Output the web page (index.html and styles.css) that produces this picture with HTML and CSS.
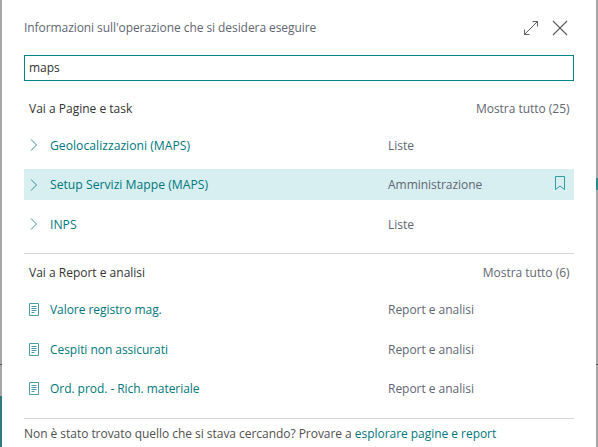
FILE: index.html
```html
<!DOCTYPE html>
<html lang="it">
<head>
<meta charset="utf-8">
<title>Ricerca</title>
<link rel="stylesheet" href="styles.css">
</head>
<body>
<div class="page">
<aside class="edge edge-left"></aside>
<main class="dialog">
  <header class="top">
    <span class="prompt">Informazioni sull'operazione che si desidera eseguire</span>
    <span class="actions">
      <svg class="ico-expand" width="16" height="16" viewBox="0 0 16 16"><path d="M1.500 14.500 14.500 1.500M9.500 1.500h5v5M1.500 9.500v5h5" fill="none" stroke="#605e5c" stroke-width="1"/></svg>
      <svg class="ico-close" width="16" height="16" viewBox="0 0 16 16"><path d="M1 1 15 15M15 1 1 15" fill="none" stroke="#605e5c" stroke-width="1.200"/></svg>
    </span>
  </header>
  <div class="search">maps</div>
  <section class="group">
    <div class="group-head"><strong>Vai a Pagine e task</strong><span class="show-all">Mostra tutto (25)</span></div>
    <div class="row"><svg class="chev" width="8" height="12" viewBox="0 0 8 12"><path d="M1 .5 6.500 6 1 11.500" fill="none" stroke="#2f8f94" stroke-width="1"/></svg><span class="name">Geolocalizzazioni (MAPS)</span><span class="cat">Liste</span></div>
    <div class="row active"><svg class="chev" width="8" height="12" viewBox="0 0 8 12"><path d="M1 .5 6.500 6 1 11.500" fill="none" stroke="#2f8f94" stroke-width="1"/></svg><span class="name">Setup Servizi Mappe (MAPS)</span><span class="cat">Amministrazione</span><svg class="mark" width="10" height="14" viewBox="0 0 10 14"><path d="M.5.500h9v13L5 10 .5 13.500Z" fill="none" stroke="#2e9ca3" stroke-width="1"/></svg></div>
    <div class="row"><svg class="chev" width="8" height="12" viewBox="0 0 8 12"><path d="M1 .5 6.500 6 1 11.500" fill="none" stroke="#2f8f94" stroke-width="1"/></svg><span class="name">INPS</span><span class="cat">Liste</span></div>
  </section>
  <section class="group second">
    <div class="group-head"><strong>Vai a Report e analisi</strong><span class="show-all">Mostra tutto (6)</span></div>
    <div class="row"><svg class="doc" width="10" height="13" viewBox="0 0 10 13"><path d="M.5.500h9v12h-9ZM2.500 3.500h5M2.500 5.500h5M2.500 7.500h5M2.500 9.500h3" fill="none" stroke="#4b9fa3" stroke-width="1"/></svg><span class="name">Valore registro mag.</span><span class="cat">Report e analisi</span></div>
    <div class="row"><svg class="doc" width="10" height="13" viewBox="0 0 10 13"><path d="M.5.500h9v12h-9ZM2.500 3.500h5M2.500 5.500h5M2.500 7.500h5M2.500 9.500h3" fill="none" stroke="#4b9fa3" stroke-width="1"/></svg><span class="name">Cespiti non assicurati</span><span class="cat">Report e analisi</span></div>
    <div class="row"><svg class="doc" width="10" height="13" viewBox="0 0 10 13"><path d="M.5.500h9v12h-9ZM2.500 3.500h5M2.500 5.500h5M2.500 7.500h5M2.500 9.500h3" fill="none" stroke="#4b9fa3" stroke-width="1"/></svg><span class="name">Ord. prod. - Rich. materiale</span><span class="cat">Report e analisi</span></div>
  </section>
  <footer class="foot">Non è stato trovato quello che si stava cercando? Provare a <a class="link">esplorare pagine e report</a></footer>
</main>
<aside class="edge edge-right"></aside>
</div>
</body>
</html>
```
FILE: styles.css
```css
html, body { margin: 0; padding: 0; height: 100%; overflow: hidden; background: #fff; }
body { font-family: "Open Sans", "Liberation Sans", sans-serif; font-size: 12px; color: #505050; }
.page { display: flex; width: 598px; height: 447px; }
.edge { flex: none; width: 2px; background: #a6a6a6; }
.edge-left { background: linear-gradient(#2e7a80, #2e7a80) 0 396px / 100% 51px no-repeat, linear-gradient(#555, #555) 0 364px / 100% 1px no-repeat, #a6a6a6; }
.edge-right { background: linear-gradient(#555, #555) 0 364px / 100% 1px no-repeat, linear-gradient(#2e8a90, #2e8a90) 0 178px / 100% 12px no-repeat, #a6a6a6; }
.dialog { flex: 1; min-width: 0; background: #fff; padding: 0 22px; display: flex; flex-direction: column; }
.top { height: 55px; display: flex; align-items: center; justify-content: space-between; }
.prompt { color: #5f6672; letter-spacing: -.07px; }
.actions { display: flex; align-items: center; gap: 13px; padding-right: 6px; }
.search { height: 24px; border: 1px solid #008489; line-height: 24px; padding-left: 4px; color: #333; }
.group-head { height: 30px; margin-top: 12px; margin-bottom: 6.5px; display: flex; align-items: center; justify-content: space-between; padding: 0 4.5px 0 5px; }
.group-head strong { font-weight: 400; color: #333; }
.show-all { color: #5f6672; letter-spacing: -.03px; }
.row { height: 31px; margin-bottom: 8.5px; display: flex; align-items: center; position: relative; }
.row:last-child { margin-bottom: 13.5px; }
.chev { margin-left: 6px; flex: none; }
.doc { margin-left: 5px; flex: none; }
.name { color: #00777c; margin-left: 12px; width: 338px; flex: none; font-size: 12.2px; }
.doc + .name { margin-left: 11px; font-size: 12px; letter-spacing: -.05px; }
.cat { color: #5f6672; letter-spacing: -.03px; }
.active { background: #d7eff0; }
.mark { position: absolute; right: 9px; top: 7px; }
.second { border-top: 1px solid #d6d6d6; }
.second .group-head { margin-top: 3px; margin-bottom: 7px; }
.second .row:last-child { margin-bottom: 14px; }
.foot { border-top: 1px solid #d6d6d6; padding-top: 6px; letter-spacing: -.04px; }
.link { color: #00777c; }
```
